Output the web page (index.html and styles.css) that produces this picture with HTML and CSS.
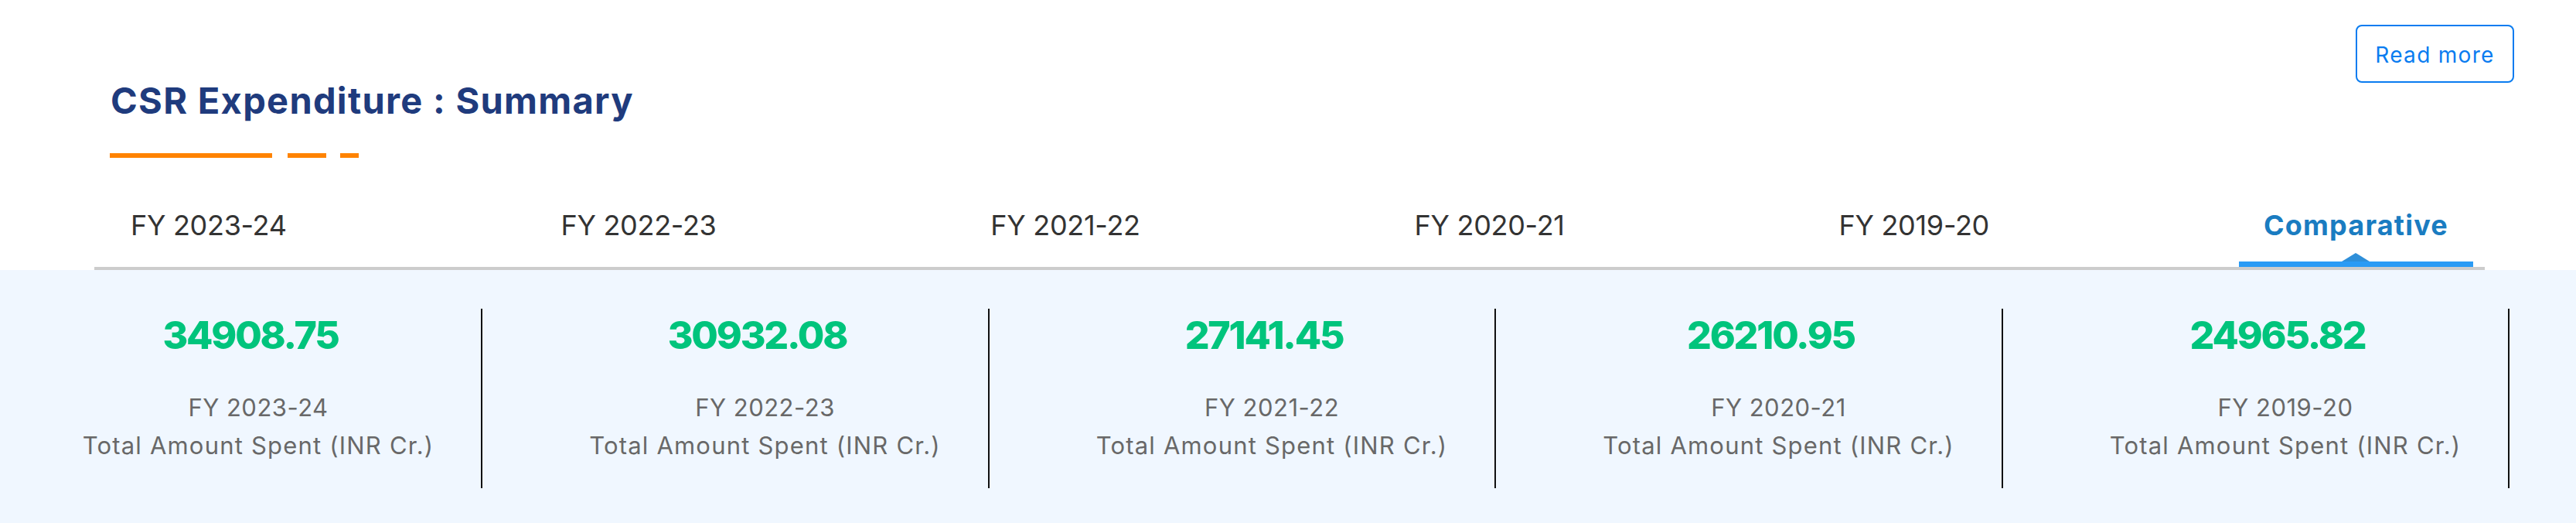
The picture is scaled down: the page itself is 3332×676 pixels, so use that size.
FILE: index.html
```html
<!DOCTYPE html>
<html lang="en">
<head>
<meta charset="utf-8">
<title>CSR Expenditure : Summary</title>
<link rel="stylesheet" href="styles.css">
</head>
<body>
<div class="page">
  <header class="top">
    <div class="heading">
      <h2 class="title">CSR Expenditure : Summary</h2>
      <div class="dashes">
        <span class="dash dash-long"></span>
        <span class="dash dash-mid"></span>
        <span class="dash dash-short"></span>
      </div>
    </div>
    <a class="btn-read" href="#">Read more</a>
  </header>

  <nav class="tabs">
    <a class="tab" href="#">FY 2023-24</a>
    <a class="tab" href="#">FY 2022-23</a>
    <a class="tab" href="#">FY 2021-22</a>
    <a class="tab" href="#">FY 2020-21</a>
    <a class="tab" href="#">FY 2019-20</a>
    <a class="tab tab-active" href="#">Comparative</a>
  </nav>

  <section class="stats">
    <div class="stat">
      <div class="stat-num">34908.75</div>
      <div class="stat-year">FY 2023-24</div>
      <div class="stat-label">Total Amount Spent (INR Cr.)</div>
    </div>
    <div class="stat">
      <div class="stat-num">30932.08</div>
      <div class="stat-year">FY 2022-23</div>
      <div class="stat-label">Total Amount Spent (INR Cr.)</div>
    </div>
    <div class="stat">
      <div class="stat-num">27141.45</div>
      <div class="stat-year">FY 2021-22</div>
      <div class="stat-label">Total Amount Spent (INR Cr.)</div>
    </div>
    <div class="stat">
      <div class="stat-num">26210.95</div>
      <div class="stat-year">FY 2020-21</div>
      <div class="stat-label">Total Amount Spent (INR Cr.)</div>
    </div>
    <div class="stat">
      <div class="stat-num">24965.82</div>
      <div class="stat-year">FY 2019-20</div>
      <div class="stat-label">Total Amount Spent (INR Cr.)</div>
    </div>
  </section>
</div>
</body>
</html>
```

FILE: styles.css
```css
* { box-sizing: border-box; }

html, body {
  margin: 0;
  padding: 0;
  background: #ffffff;
}

body {
  font-family: Inter, "Noto Sans", sans-serif;
  width: 3332px;
  height: 676px;
  overflow: hidden;
}

.page {
  display: flex;
  flex-direction: column;
  height: 676px;
}

.top {
  display: flex;
  justify-content: space-between;
  align-items: flex-start;
  padding: 32px 80px 0 143px;
}

.heading {
  display: flex;
  flex-direction: column;
  padding-top: 74px;
}

.title {
  margin: 0;
  font-size: 47px;
  line-height: 47px;
  font-weight: 700;
  color: #1f3b7d;
  letter-spacing: 1.3px;
  white-space: nowrap;
}

.dashes {
  display: flex;
  margin-top: 45px;
  height: 6px;
}

.dash {
  display: block;
  height: 6px;
  background: #ff8300;
}

.dash-long { width: 210px; margin-left: -1px; }
.dash-mid { width: 50px; margin-left: 20px; }
.dash-short { width: 24px; margin-left: 18px; }

.btn-read {
  display: flex;
  align-items: center;
  justify-content: center;
  width: 205px;
  height: 75px;
  border: 2px solid #0a7cf0;
  border-radius: 8px;
  color: #0a7cf0;
  font-size: 28px;
  letter-spacing: 1.3px;
  text-decoration: none;
  padding-top: 2px;
}

.tabs {
  display: flex;
  justify-content: space-between;
  margin: 69px 118px 0 122px;
  padding: 0 15px;
  border-bottom: 4px solid #cccccc;
}

.tab {
  position: relative;
  display: block;
  padding: 0 32px 36px;
  font-size: 36px;
  line-height: 36px;
  color: #333333;
  letter-spacing: -0.3px;
  text-decoration: none;
  white-space: nowrap;
}

.tab-active {
  color: #1a7cc1;
  font-weight: 700;
  letter-spacing: 1.2px;
}

.tab-active::after {
  content: "";
  position: absolute;
  left: 0;
  right: 0;
  bottom: 0;
  height: 7px;
  background: #2a9bf5;
}

.tab-active::before {
  content: "";
  position: absolute;
  left: 50%;
  bottom: 7px;
  margin-left: -18px;
  border-left: 18px solid transparent;
  border-right: 18px solid transparent;
  border-bottom: 11px solid #2f8fd9;
}

.stats {
  flex: 1;
  display: flex;
  gap: 77.5px;
  background: #f0f7ff;
  padding: 50px 0 0 46px;
}

.stat {
  width: 578px;
  height: 232px;
  border-right: 2px solid #111111;
  display: flex;
  flex-direction: column;
  align-items: center;
  padding-top: 9px;
  text-align: center;
}

.stat-num {
  font-size: 50px;
  line-height: 50px;
  font-weight: 800;
  color: #00c47c;
  letter-spacing: -2.2px;
  padding-right: 20px;
}

.stat-year {
  margin-top: 44px;
  font-size: 31px;
  line-height: 49px;
  color: #686868;
  letter-spacing: 0.5px;
}

.stat-label {
  font-size: 31px;
  line-height: 49px;
  color: #686868;
  letter-spacing: 1.2px;
  white-space: nowrap;
}
```
